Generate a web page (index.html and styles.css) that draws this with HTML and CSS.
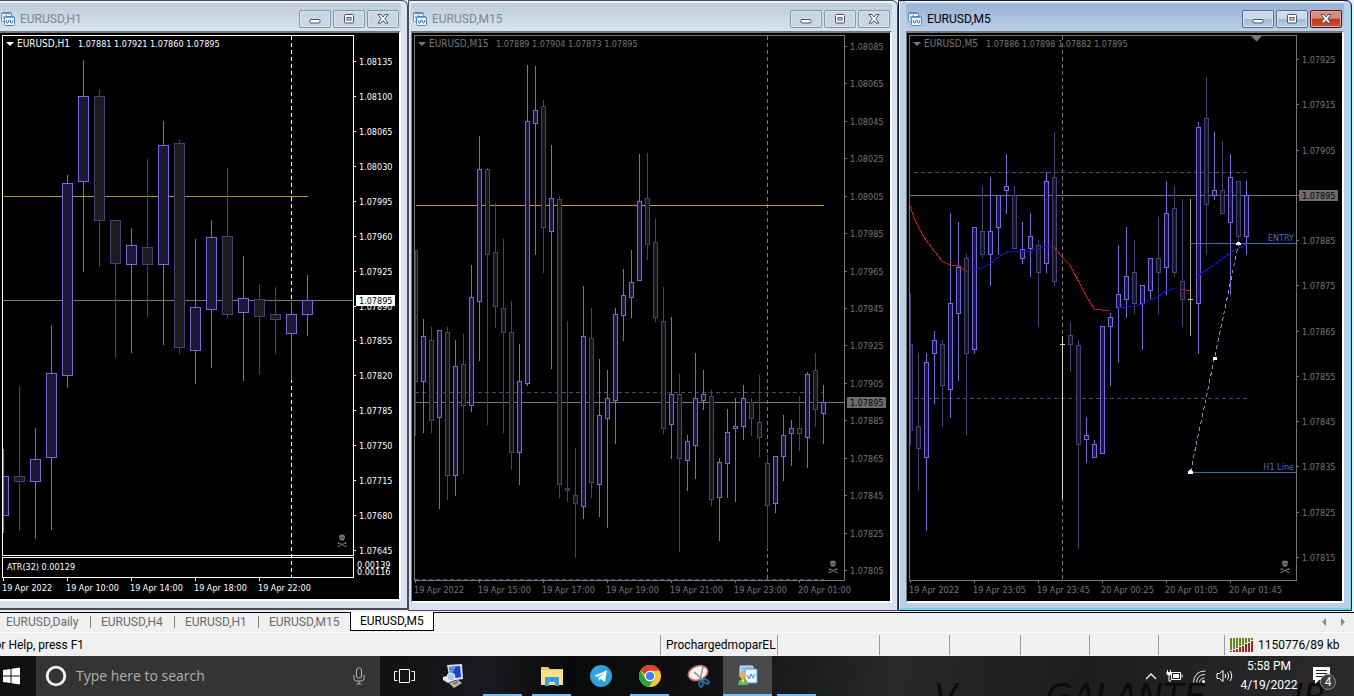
FILE: index.html
```html
<!DOCTYPE html>
<html lang="en">
<head>
<meta charset="utf-8">
<title>EURUSD charts</title>
<link rel="stylesheet" href="styles.css">
</head>
<body>
<svg class="defs" aria-hidden="true">
  <symbol id="chart-icon" viewBox="0 0 16 16">
    <rect x="1.5" y="1.5" width="10" height="9" rx="1" fill="#eaf3fc" stroke="#5a8cc4"/>
    <path d="M2 2.5h9" stroke="#5a8cc4"/>
    <path d="M4 5v3M6 4v3M8 5v2" stroke="#3f78bd"/>
    <rect x="4.500" y="5.500" width="10" height="9" rx="1" fill="#f6fbff" stroke="#4f86c6"/>
    <path d="M5 6.500h9" stroke="#6fa3dc"/>
    <path d="M6 9l1 3h1l1-3h1l1 3h1l1-3" fill="none" stroke="#3f78bd"/>
  </symbol>
  <symbol id="min-icon" viewBox="0 0 12 10">
    <rect x="1" y="5.500" width="10" height="3.500" rx="1" fill="#fff" stroke="#4b5160"/>
  </symbol>
  <symbol id="max-icon" viewBox="0 0 12 10">
    <rect x="1.500" y=".5" width="9" height="8.500" rx="1" fill="#fff" stroke="#4b5160"/>
    <rect x="4" y="3.500" width="4" height="2.500" fill="#dfe8f2" stroke="#4b5160"/>
  </symbol>
  <symbol id="close-icon" viewBox="0 0 12 10">
    <path d="M1 .5h3l2 2.500 2-2.500h3l-3.200 4.300 3.200 4.300h-3l-2-2.500-2 2.500h-3l3.200-4.300z" fill="#fff" stroke="#4b5160"/>
  </symbol>
  <symbol id="skull" viewBox="0 0 10 14">
    <path d="M5 .5c-2.300 0-3 1.300-3 2.800C2 4.600 3 5 3.200 6.500h3.600C7 5 8 4.600 8 3.300 8 1.800 7.300.5 5 .5z" fill="currentColor"/>
    <path d="M3.500 3h1v1.300h-1zM5.600 3h1v1.300h-1z" fill="#000"/>
    <path d="M1 8.500L9 12.500M9 8.500L1 12.500M.5 9.500h1.500M8 9.500h1.500M.5 12.500h1.500M8 12.500h1.500" stroke="currentColor" fill="none"/>
  </symbol>
</svg>

<main class="workspace">
  <section class="win win-h1" aria-label="EURUSD,H1">
    <header class="titlebar">
      <svg class="win-icon"><use href="#chart-icon"/></svg>
      <h2 class="win-title">EURUSD,H1</h2>
      <div class="win-buttons">
        <button class="wb" aria-label="Minimize"><svg><use href="#min-icon"/></svg></button>
        <button class="wb" aria-label="Maximize"><svg><use href="#max-icon"/></svg></button>
        <button class="wb" aria-label="Close"><svg><use href="#close-icon"/></svg></button>
      </div>
    </header>
    <div class="chart"><svg id="h1" viewBox="0 33 399 566" preserveAspectRatio="xMinYMin meet"></svg></div>
  </section>

  <section class="win win-m15" aria-label="EURUSD,M15">
    <header class="titlebar">
      <svg class="win-icon"><use href="#chart-icon"/></svg>
      <h2 class="win-title">EURUSD,M15</h2>
      <div class="win-buttons">
        <button class="wb" aria-label="Minimize"><svg><use href="#min-icon"/></svg></button>
        <button class="wb" aria-label="Maximize"><svg><use href="#max-icon"/></svg></button>
        <button class="wb" aria-label="Close"><svg><use href="#close-icon"/></svg></button>
      </div>
    </header>
    <div class="chart"><svg id="m15" viewBox="412 33 478 568" preserveAspectRatio="xMinYMin meet"></svg></div>
  </section>

  <section class="win win-m5 active" aria-label="EURUSD,M5">
    <header class="titlebar">
      <svg class="win-icon"><use href="#chart-icon"/></svg>
      <h2 class="win-title">EURUSD,M5</h2>
      <div class="win-buttons">
        <button class="wb" aria-label="Minimize"><svg><use href="#min-icon"/></svg></button>
        <button class="wb" aria-label="Maximize"><svg><use href="#max-icon"/></svg></button>
        <button class="wb wb-close" aria-label="Close"><svg><use href="#close-icon"/></svg></button>
      </div>
    </header>
    <div class="chart"><svg id="m5" viewBox="907 33 435 568" preserveAspectRatio="xMinYMin meet"></svg></div>
  </section>
</main>

<nav class="tabs">
  <button class="tab">EURUSD,Daily</button>
  <button class="tab">EURUSD,H4</button>
  <button class="tab">EURUSD,H1</button>
  <button class="tab">EURUSD,M15</button>
  <button class="tab tab-on">EURUSD,M5</button>
  <div class="tab-arrows">
    <button aria-label="Scroll left"><svg width="4" height="8" viewBox="0 0 4 8"><path d="M4 0v8L0 4z" fill="#888"/></svg></button>
    <button aria-label="Scroll right"><svg width="4" height="8" viewBox="0 0 4 8"><path d="M0 0v8l4-4z" fill="#888"/></svg></button>
  </div>
</nav>

<div class="status">
  <span class="cell help"><span class="help-text">For Help, press F1</span></span>
  <span class="cell profile">ProchargedmoparEL</span>
  <span class="cell c1"></span>
  <span class="cell c2"></span>
  <span class="cell c3"></span>
  <span class="cell c4"></span>
  <span class="cell c4"></span>
  <span class="cell c5"></span>
  <span class="cell traffic">
    <svg width="24" height="14" viewBox="0 0 24 14">
      <path d="M1 0v12M4 0v11M7 0v10M10 0v8M13 0v7M16 0v5M19 0v4M22 0v2" stroke="#5b8a1a" stroke-width="2"/>
      <path d="M1 13v1M4 12v2M7 11v3M10 9v5M13 8v6M16 6v8M19 5v9M22 3v11" stroke="#a8231c" stroke-width="2"/>
    </svg>
    1150776/89 kb
  </span>
</div>

<footer class="taskbar">
  <div class="wallpaper" aria-hidden="true"><span>V</span><span>GALANTE</span><span>JR</span></div>
  <button class="start" aria-label="Start">
    <svg width="18" height="18" viewBox="0 0 18 18"><path d="M0 3l7.500-1v6.500H0zM8.500 1.800L17 .6v7.900H8.500zM0 9.500h7.500V16L0 15zM8.500 9.500H17v7.900l-8.500-1.200z" fill="#fff"/></svg>
  </button>
  <div class="search">
    <svg width="22" height="22" viewBox="0 0 22 22"><circle cx="11" cy="11" r="8.800" fill="none" stroke="#f2f2f2" stroke-width="2.800"/></svg>
    <input type="text" aria-label="Search" placeholder="Type here to search">
    <svg width="12" height="18" viewBox="0 0 12 18"><rect x="3.500" y="1" width="5" height="10" rx="2" fill="none" stroke="#b4b4b4"/><path d="M1 8v3.500Q1 14 3.500 14h5Q11 14 11 11.500V8M6 14v3M3.500 17h5" fill="none" stroke="#b4b4b4"/></svg>
  </div>
  <div class="apps">
    <button class="app" aria-label="Task view">
      <svg width="21" height="15" viewBox="0 0 21 15"><path d="M5.500 .5h10v13h-10zM3.500 2.500h-3v9h3M17.500 2.500h3v9h-3" fill="none" stroke="#f4f4f4"/></svg>
    </button>
    <button class="app" aria-label="Remote PC">
      <svg width="24" height="26" viewBox="0 0 24 26">
        <path d="M5 2l15-1 1 15-13 2z" fill="#d9dde3"/><path d="M7 4l11-1 1 11-10 2z" fill="#1d3fd0"/><path d="M7 4l7-.6L9 13z" fill="#5e86f0"/>
        <path d="M1 14l8-2 5 4-8 4-5-3z" fill="#e4e8ee"/><circle cx="9" cy="14" r="4" fill="#a9c6ee" stroke="#e8eef6"/>
        <path d="M7 20l9-3 4 3-8 5z" fill="#b9b7b0"/><path d="M11 21l5-2" stroke="#7e7a6e" stroke-width="2"/>
      </svg>
    </button>
    <button class="app run" aria-label="Running app"></button>
    <button class="app run" aria-label="File Explorer">
      <svg width="22" height="20" viewBox="0 0 22 20"><path d="M0 1h7l2 2h13v15H0z" fill="#f0c65f"/><path d="M0 4h22v15H0z" fill="#fbdf8c"/><path d="M4 20v-8q0-1 1-1h12q1 0 1 1v8h-4v-4H8v4z" fill="#3a9fe0"/></svg>
    </button>
    <button class="app" aria-label="Telegram">
      <svg width="22" height="22" viewBox="0 0 22 22"><circle cx="11" cy="11" r="11" fill="#2ea3dc"/><path d="M4 10.800L17 5.500 15 17l-4.200-3-2 2-.5-3.600L15 7.500 7 12z" fill="#fff"/></svg>
    </button>
    <button class="app run" aria-label="Chrome">
      <svg width="22" height="22" viewBox="0 0 22 22"><circle cx="11" cy="11" r="11" fill="#f9c62f"/><path d="M11 0a11 11 0 0 1 9.600 5.700H11a5.300 5.300 0 0 0-5 3.500L1.700 5.300A11 11 0 0 1 11 0z" fill="#e2402f"/><path d="M1.600 5.300A11 11 0 0 0 10 22l4.500-7.200a5 5 0 0 1-8.100-1z" fill="#2ba24c"/><circle cx="11" cy="11" r="5.300" fill="#fff"/><circle cx="11" cy="11" r="4.100" fill="#3f7fee"/></svg>
    </button>
    <button class="app" aria-label="Snipping Tool">
      <svg width="24" height="24" viewBox="0 0 24 24"><path d="M2 12q1 7 9 5l2-4z" fill="#8c5358"/><ellipse cx="11" cy="9" rx="10" ry="7" transform="rotate(-20 11 9)" fill="#f3f0f0" stroke="#d0606a" stroke-width="1.500"/><path d="M16 3L13 16M7 8l9 8" stroke="#888" stroke-width="1.300"/><ellipse cx="14" cy="20" rx="1.800" ry="2.800" fill="none" stroke="#1d76b8" stroke-width="1.800"/><ellipse cx="19" cy="17.500" rx="3" ry="1.800" transform="rotate(30 19 17.500)" fill="none" stroke="#1d76b8" stroke-width="1.800"/></svg>
    </button>
    <button class="app run current" aria-label="MetaTrader">
      <svg width="22" height="22" viewBox="0 0 22 22"><rect x="3" y="1" width="13" height="11" rx="1" fill="#8fc4f2" stroke="#d8ecfb"/><rect x="8" y="4" width="12" height="14" rx="1" fill="#e9f4fd" stroke="#4d9de0"/><path d="M10 10l2 4 2-5 2 4 2-4" fill="none" stroke="#3b86cf"/><circle cx="6" cy="11" r="3" fill="#f1b03d"/><path d="M1 20q0-6 5-6t5 6z" fill="#69b744"/><path d="M5 14.500l1 4 1-4z" fill="#fff"/></svg>
    </button>
    <button class="app run" aria-label="Running app"></button>
  </div>
  <div class="tray">
    <svg width="12" height="8" viewBox="0 0 12 8"><path d="M1 7l5-5 5 5" fill="none" stroke="#fff" stroke-width="1.300"/></svg>
    <svg width="17" height="14" viewBox="0 0 17 14"><path d="M5.500 3.500h9v7h-9zM16 5.500v3" fill="none" stroke="#fff"/><path d="M7 5h6v4H7z" fill="#fff"/><path d="M1.500 1v2M4.500 1v2M3 6.500V12h2" stroke="#fff" fill="none"/><path d="M.5 3h5v2L4 6.500H2L.5 5z" fill="#fff"/></svg>
    <svg width="15" height="15" viewBox="0 0 15 15"><g fill="none" stroke="#e8e8e8"><path d="M1.500 13.500Q2 2 13.500 2"/><path d="M4.500 13.500Q5 5.500 13 5.500"/><path d="M7.500 13.500Q8 9 12.500 9"/></g><circle cx="11.500" cy="12.500" r="1.500" fill="#fff"/></svg>
    <svg width="17" height="14" viewBox="0 0 17 14"><path d="M1 4.500h2.500L7 1.500v11L3.500 9.500H1zM9 5q1.500 2 0 4M11.500 3.500q2.500 3.500 0 7M14 2q3.500 5 0 10" fill="none" stroke="#fff"/></svg>
    <div class="clock"><span>5:58 PM</span><span>4/19/2022</span></div>
    <div class="notify">
      <svg width="17" height="18" viewBox="0 0 17 18"><path d="M0 0h17v13H6l-4 4v-4H0z" fill="#fff"/><path d="M3 3.500h11M3 6.500h11M3 9.500h7" stroke="#222"/></svg>
      <span class="badge">4</span>
    </div>
  </div>
</footer>
<script src="charts.js"></script>
</body>
</html>
```

FILE: styles.css
```css
* { box-sizing: border-box; }
body {
  margin: 0;
  min-height: 100vh;
  display: flex;
  flex-direction: column;
  background: #f0f0f0;
  font-family: Roboto, "Open Sans", sans-serif;
  font-size: 12px;
  line-height: 16px;
  color: #000;
}
button { font: inherit; color: inherit; border: 0; padding: 0; margin: 0; background: none; }
svg { flex: none; display: block; }
.defs { position: absolute; width: 0; height: 0; }

/* MDI area */
.workspace {
  flex: 1;
  display: grid;
  grid-template-columns: 408fr 490fr 454fr;
  align-items: start;
  padding-right: 2px;
  background: #eceef2;
  border-bottom: 1px solid #000;
}
.win {
  display: flex;
  flex-direction: column;
  min-width: 0;
  background: #d7e3f0;
  border: 1px solid #4a4a58;
  border-top-right-radius: 6px;
}
.win-h1 { height: 610px; padding: 0 6px 7px 0; border-left: 0; border-bottom-width: 2px; }
.win-m15 { height: 611px; padding: 0 5px 7px 2px; }
.win-m5 { height: 611px; padding: 0 7px 7px 7px; }
.win.active {
  background: #bbd0e9;
  border-color: #1c1c28;
  box-shadow: inset 1px 0 #dff3fb, inset -1px -2px #6fd6ee;
}
.titlebar {
  height: 30px;
  flex: none;
  display: flex;
  align-items: center;
  gap: 4px;
  padding: 6px 2px 0 0;
  background: linear-gradient(#f4f8fc 0 1px, #bfccdc 3px, #d8e3ef);
}
.win-m15 .titlebar { padding-left: 1px; }
.active .titlebar { padding-left: 1px; background: linear-gradient(#eaf4fc 0 1px, #97b3d5 3px, #bbd0e9); }
.win-icon { width: 16px; height: 16px; }
.win-title { margin: 0; font-size: 12px; font-weight: 400; line-height: 16px; color: #7f868f; flex: 1; }
.active .win-title { color: #000; }
.win-buttons { display: flex; gap: 2px; }
.wb {
  width: 32px;
  height: 18px;
  display: flex;
  align-items: center;
  justify-content: center;
  border: 1px solid #8494ab;
  border-radius: 2px;
  box-shadow: inset 0 0 0 1px #dbe5f0;
  background: #c9d6e5;
}
.wb svg { width: 12px; height: 10px; }
.active .wb { border-color: #55708f; background: linear-gradient(#cad9ea 50%, #a3bbd8 50%, #b8cee6); }
.active .wb-close { border-color: #54151a; box-shadow: inset 0 0 0 1px #e5a596; background: linear-gradient(#dd8c7c 45%, #bb3722 50%, #cc5138); }

.chart {
  flex: 1;
  min-height: 0;
  background: #000;
  border-top: 2px solid #74767a;
  border-right: 2px solid #fff;
  border-bottom: 2px solid #fff;
}
.win-m15 .chart,
.win-m5 .chart { border-left: 1px solid #74767a; }
.chart svg { width: 100%; height: 100%; }
.chart text { font-family: "DejaVu Sans Condensed", "DejaVu Sans", sans-serif; font-size: 9px; white-space: pre; }
.chart .symbol { font-size: 10px; }
.crisp { shape-rendering: crispEdges; }

/* Chart tabs */
.tabs {
  height: 21px;
  display: flex;
  align-items: stretch;
  border-bottom: 1px solid #fff;
  color: #6a6a6a;
  margin-top: -1px;
}
.tab { position: relative; padding: 0 12px 0 6px; text-align: left; width: 84px; }
.tab:first-child { width: 95px; }
.tab:not(.tab-on)::after { content: ""; position: absolute; right: 4px; top: 4px; height: 12px; border-right: 1px solid #808080; }
.tab:nth-child(4) { width: 87px; }
.tab:nth-child(4)::after { display: none; }
.tab-on { color: #000; background: #fff; border: 1px solid #000; border-top: 0; padding: 0 9px; margin-bottom: 1px; }
.tab-arrows { margin-left: auto; display: flex; gap: 15px; padding-right: 9px; align-items: center; }

/* Status bar */
.status { height: 23px; display: flex; align-items: flex-end; padding-bottom: 1px; overflow: hidden; }
.cell { height: 20px; line-height: 20px; border-right: 1px solid #9a9a9a; flex: none; white-space: nowrap; }
.help { flex: 1; overflow: hidden; display: flex; }
.help-text { margin-left: -12px; }
.profile { width: 117px; padding-left: 5px; }
.c1 { width: 102px; }
.c2 { width: 70px; }
.c3 { width: 71px; }
.c4 { width: 69px; }
.c5 { width: 66px; }
.traffic { width: 129px; display: flex; align-items: center; gap: 4px; padding-left: 5px; border-right: 0; }

/* Taskbar */
.taskbar {
  position: relative;
  height: 40px;
  display: flex;
  overflow: hidden;
  background: linear-gradient(100deg, #101113 0 28%, #191a1d 36%, #08090a 42%, #101012 52%, #27282a 66%, #1d1d1f 80%, #2a2a2c);
}
.wallpaper {
  position: absolute;
  left: 69%;
  right: 2%;
  top: 22px;
  display: flex;
  justify-content: space-between;
  font: italic 34px/36px "DejaVu Sans", sans-serif;
  color: #0b0b0c;
}
.start { width: 36px; padding-left: 3px; }
.search { width: 344px; display: flex; align-items: center; gap: 9px; padding: 0 15px 0 9px; background: #343434; }
.search input { flex: 1; min-width: 0; border: 0; padding: 0; background: none; font: 14px/20px "Open Sans", sans-serif; color: #fff; }
.search input::placeholder { color: #b0b0b0; opacity: 1; }
.apps { display: flex; position: relative; }
.app { width: 49px; display: flex; align-items: center; justify-content: center; position: relative; }
.app.run::after { content: ""; position: absolute; left: 5px; right: 5px; bottom: 0; height: 2px; background: #76b9ed; }
.app.current { background: #48494b; }
.app.current::after { left: 0; right: 0; }
.tray { position: relative; margin-left: auto; display: flex; align-items: center; gap: 9px; padding-right: 24px; color: #fff; }
.clock { display: flex; flex-direction: column; align-items: center; line-height: 19px; width: 54px; white-space: nowrap; }
.notify { position: relative; margin-left: 8px; }
.badge {
  position: absolute;
  left: 7px;
  top: 7px;
  width: 16px;
  height: 16px;
  border-radius: 8px;
  border: 1px solid #8a8a8a;
  background: #3a3a3a;
  font-size: 12px;
  line-height: 14px;
  text-align: center;
}
```

FILE: charts.js
```js
// Candle rows: [x, high, body top, body bottom, low, rising]
const H1 = [
  [3,449,476,516,533,1],[19,386,476,482,531,0],[35,428,459,482,539,1],[51,325,373,458,530,1],
  [67,175,183,376,388,1],[83,60,96,182,272,1],[99,89,96,221,267,0],[115,220,220,264,358,0],
  [131,228,245,265,353,1],[147,159,247,265,317,0],[163,121,145,265,345,1],[179,140,143,348,354,0],
  [195,239,307,351,384,1],[211,220,237,310,368,1],[227,168,236,315,318,0],[243,256,298,313,381,1],
  [259,284,299,317,375,0],[275,287,314,320,354,0],[291,302,314,334,380,1],[307,275,300,315,336,1]
];
const M15 = [
  [415,250,250,382,436,0],[423,319,336,382,433,1],[431,327,340,421,433,0],[439,330,330,418,509,1],
  [447,327,332,476,500,0],[455,340,366,476,496,1],[463,334,364,406,474,0],[471,265,297,406,412,1],
  [479,136,169,302,361,1],[487,168,169,255,425,0],[495,203,252,307,328,0],[503,239,308,333,433,0],
  [511,301,332,453,470,0],[519,344,381,453,485,1],[527,65,121,384,386,1],[535,66,110,124,255,1],
  [543,100,106,228,273,0],[551,145,198,232,369,1],[559,196,199,485,498,0],[567,321,488,491,502,0],
  [575,448,495,504,558,0],[583,286,336,507,519,1],[591,308,338,483,498,0],[599,359,415,485,517,1],
  [607,370,398,419,528,1],[615,308,314,401,444,1],[623,269,295,316,341,1],[631,250,282,298,318,1],
  [639,154,201,281,281,1],[647,153,198,245,260,0],[655,218,242,318,322,0],[663,287,321,429,434,0],
  [671,317,394,425,459,1],[679,374,394,459,552,0],[687,435,441,461,491,1],[695,353,398,446,479,1],
  [703,370,394,401,410,1],[711,390,396,500,506,0],[719,458,462,498,541,1],[727,409,432,464,498,1],
  [735,398,426,429,502,1],[743,385,398,427,440,1],[751,398,402,419,436,0],[759,375,422,438,457,0],
  [767,455,463,506,549,0],[775,456,456,504,513,1],[783,415,435,457,481,1],[791,420,428,434,466,1],
  [799,396,428,434,451,0],[807,372,374,438,468,1],[815,353,370,410,427,0],[823,385,402,414,444,1]
];
const M5 = [
  [910,293,344,431,445,0],[918,353,426,449,490,0],[926,353,362,458,531,1],[934,331,340,354,404,1],
  [942,340,344,386,427,0],[950,213,303,390,418,1],[958,222,267,314,381,1],[966,254,258,354,436,0],
  [974,227,227,350,354,1],[982,186,231,255,258,0],[990,177,231,255,286,1],[998,195,195,228,255,1],
  [1006,154,186,191,214,1],[1014,186,195,249,249,0],[1022,222,249,259,264,1],[1030,213,236,249,277,1],
  [1038,240,245,273,327,0],[1046,172,181,264,273,1],[1054,132,177,282,286,0],[1070,322,335,345,372,0],
  [1078,340,345,445,549,0],[1086,417,435,440,463,1],[1094,440,444,458,458,1],[1102,326,326,454,454,1],
  [1110,313,317,327,386,1],[1118,245,294,308,363,1],[1126,227,276,300,318,1],[1134,240,272,304,314,0],
  [1142,285,285,304,350,1],[1150,258,258,291,300,1],[1158,217,258,273,314,0],[1166,181,213,268,295,1],
  [1174,186,208,273,277,0],[1182,199,281,300,327,0],[1198,122,127,304,354,1],[1206,77,118,205,255,0],
  [1214,132,190,196,200,1],[1222,141,190,214,214,0],[1230,154,177,223,295,1],[1238,181,181,237,245,0],
  [1246,181,195,237,255,1]
];

function painter(id) {
  const svg = document.getElementById(id);
  const el = (tag, attrs, text) => {
    const n = document.createElementNS("http://www.w3.org/2000/svg", tag);
    for (const k in attrs) n.setAttribute(k, attrs[k]);
    if (text !== undefined) n.textContent = text;
    svg.appendChild(n);
    return n;
  };
  const path = (d, stroke, extra) =>
    el("path", Object.assign({ d, stroke, fill: "none", class: "crisp" }, extra));
  return {
    el, path,
    h: (x1, x2, y, c, dash) => path(`M${x1} ${y + 0.5}H${x2}`, c, dash ? { "stroke-dasharray": dash } : {}),
    v: (x, y1, y2, c, dash) => path(`M${x + 0.5} ${y1}V${y2}`, c, dash ? { "stroke-dasharray": dash } : {}),
    box: (x, y, w, h, fill) => el("rect", { x, y, width: w, height: h, fill }),
    text: (x, y, t, fill, anchor) => el("text", { x, y, fill, "text-anchor": anchor || "start" }, t),
    candles(rows, half, left, c) {
      for (const [x, hi, top, bot, lo, up] of rows) {
        const s = up ? c.up : c.down;
        path(`M${x + 0.5} ${hi}V${top}M${x + 0.5} ${bot}V${lo}`, s);
        const l = Math.max(x - half, left);
        el("rect", {
          x: l + 0.5, y: top + 0.5, width: x + half - l, height: Math.max(bot - top - 1, 1),
          fill: up ? c.upFill : c.downFill, stroke: s, class: "crisp"
        });
      }
    },
    scale(x, ys, first, step, c) {
      ys.forEach((y, i) => {
        this.h(x, x + 3, y, c);
        this.text(x + 6, y + 4, (first - i * step).toFixed(5), c);
      });
    },
    times(x, gap, y, labels, c) {
      labels.forEach((t, i) => {
        this.v(x + i * gap, y, y + 3, c);
        this.text(x + i * gap - 1, y + 13, t, c);
      });
    },
    head(x, name, prices, px, c) {
      el("path", { d: `M${x} 42h8l-4 4z`, fill: c });
      el("text", { x: x + 11, y: 47, fill: c, class: "symbol" }, name);
      this.text(px, 47, prices, c);
    },
    skull(x, y, c) {
      el("use", { href: "#skull", x, y, width: 10, height: 14, color: c });
    }
  };
}

const GREY = "#777777";
const dim = { up: "#766adb", upFill: "#1c1548", down: "#454078", downFill: "#19171f" };

// H1
let p = painter("h1");
p.v(291, 36, 577, "#fff", "4 3");
p.h(4, 308, 196, "#b59338");
p.h(3, 353, 300, GREY);
p.candles(H1, 5, 3, { up: "#766adb", upFill: "#1b1735", down: "#454078", downFill: "#1c1c1c" });
p.el("rect", { x: 2.5, y: 35.5, width: 351, height: 520, fill: "none", stroke: "#fff", class: "crisp" });
p.el("rect", { x: 2.5, y: 557.5, width: 351, height: 20, fill: "none", stroke: "#fff", class: "crisp" });
p.scale(353, [61,96,131,166,201,236,271,306,340,375,410,445,480,515,550], 1.08135, 0.00035, "#fff");
p.box(356, 295, 39, 11, "#fff");
p.text(359, 304, "1.07895", "#000");
p.text(357, 568, "0.00139", "#fff");
p.text(357, 575, "0.00116", "#fff");
p.text(7, 570, "ATR(32) 0.00129", "#fff");
p.times(3, 64, 578, ["19 Apr 2022","19 Apr 10:00","19 Apr 14:00","19 Apr 18:00","19 Apr 22:00"], "#fff");
p.head(6, "EURUSD,H1", "1.07881 1.07921 1.07860 1.07895", 78, "#fff");
p.skull(337, 534, GREY);

// M15
p = painter("m15");
p.v(767, 36, 579, GREY, "4 3");
p.h(416, 824, 205, "#c9974c");
p.h(415, 824, 392, "#4a4678", "4 3");
p.h(415, 824, 579, "#4a4678", "4 3");
p.h(415, 844, 402, GREY);
p.candles(M15, 2, 415, dim);
p.el("rect", { x: 414.5, y: 35.5, width: 430, height: 545, fill: "none", stroke: GREY, class: "crisp" });
p.scale(844, [46,83,121,158,196,233,271,308,345,383,420,458,495,533,570], 1.08085, 0.0002, GREY);
p.box(847, 397, 39, 11, "#6c6c6c");
p.text(850, 406, "1.07895", "#000");
p.times(415, 64, 580, ["19 Apr 2022","19 Apr 15:00","19 Apr 17:00","19 Apr 19:00","19 Apr 21:00","19 Apr 23:00","20 Apr 01:00"], GREY);
p.head(418, "EURUSD,M15", "1.07889 1.07904 1.07873 1.07895", 496, GREY);
p.skull(828, 560, GREY);

// M5
p = painter("m5");
p.v(1062, 36, 579, GREY, "4 3");
p.h(914, 1248, 172, "#4a4678", "4 3");
p.h(914, 1248, 398, "#4a4a80", "4 3");
p.h(910, 1296, 195, GREY);
p.candles(M5, 2, 910, dim);
p.v(1062, 336, 499, "#d8d8d0");
p.h(1060, 1065, 344, "#d8d8d0");
p.v(1190, 199, 336, "#a9a997");
p.h(1188, 1193, 299, "#d8d8d0");
const RED = "#d01616", BLUE = "#1410d8";
p.path("M909 203L914 218 922 234 928 243 942 261 950 265H958L967 272M1054 247L1061 256 1070 265 1083 290 1094 309 1110 311M1182 289L1190 291", RED);
p.path("M971 271L982 268 990 264 1000 256 1008 251H1030L1046 247 1054 246M1118 308L1134 306 1142 304 1150 300 1158 297 1166 291 1175 288M1196 277L1214 265 1230 253 1246 244", BLUE);
p.h(1190, 1296, 243, "#4466b4");
p.h(1190, 1296, 472, "#4466b4");
p.path("M1190.5 472L1214.5 358 1238.500 244", "#8e8ac0", { "stroke-dasharray": "4 3" });
p.box(1188, 471, 5, 3, "#fff");
p.box(1189, 470, 3, 2, "#fff");
p.box(1213, 357, 4, 3, "#fff");
p.box(1236, 243, 5, 2, "#fff");
p.box(1237, 242, 3, 1, "#fff");
p.text(1294, 241, "ENTRY", "#4f68c4", "end");
p.text(1294, 470, "H1 Line", "#4f68c4", "end");
p.el("rect", { x: 909.5, y: 35.5, width: 387, height: 545, fill: "none", stroke: GREY, class: "crisp" });
p.el("path", { d: "M1251 36h11l-5.500 5.500z", fill: GREY });
p.scale(1296, [59,104,150,195,240,285,331,376,421,466,512,557], 1.07925, 0.0001, GREY);
p.box(1299, 190, 39, 11, "#6c6c6c");
p.text(1302, 199, "1.07895", "#000");
p.times(910, 64, 580, ["19 Apr 2022","19 Apr 23:05","19 Apr 23:45","20 Apr 00:25","20 Apr 01:05","20 Apr 01:45"], GREY);
p.head(913, "EURUSD,M5", "1.07886 1.07898 1.07882 1.07895", 986, GREY);
p.skull(1280, 560, GREY);
```
